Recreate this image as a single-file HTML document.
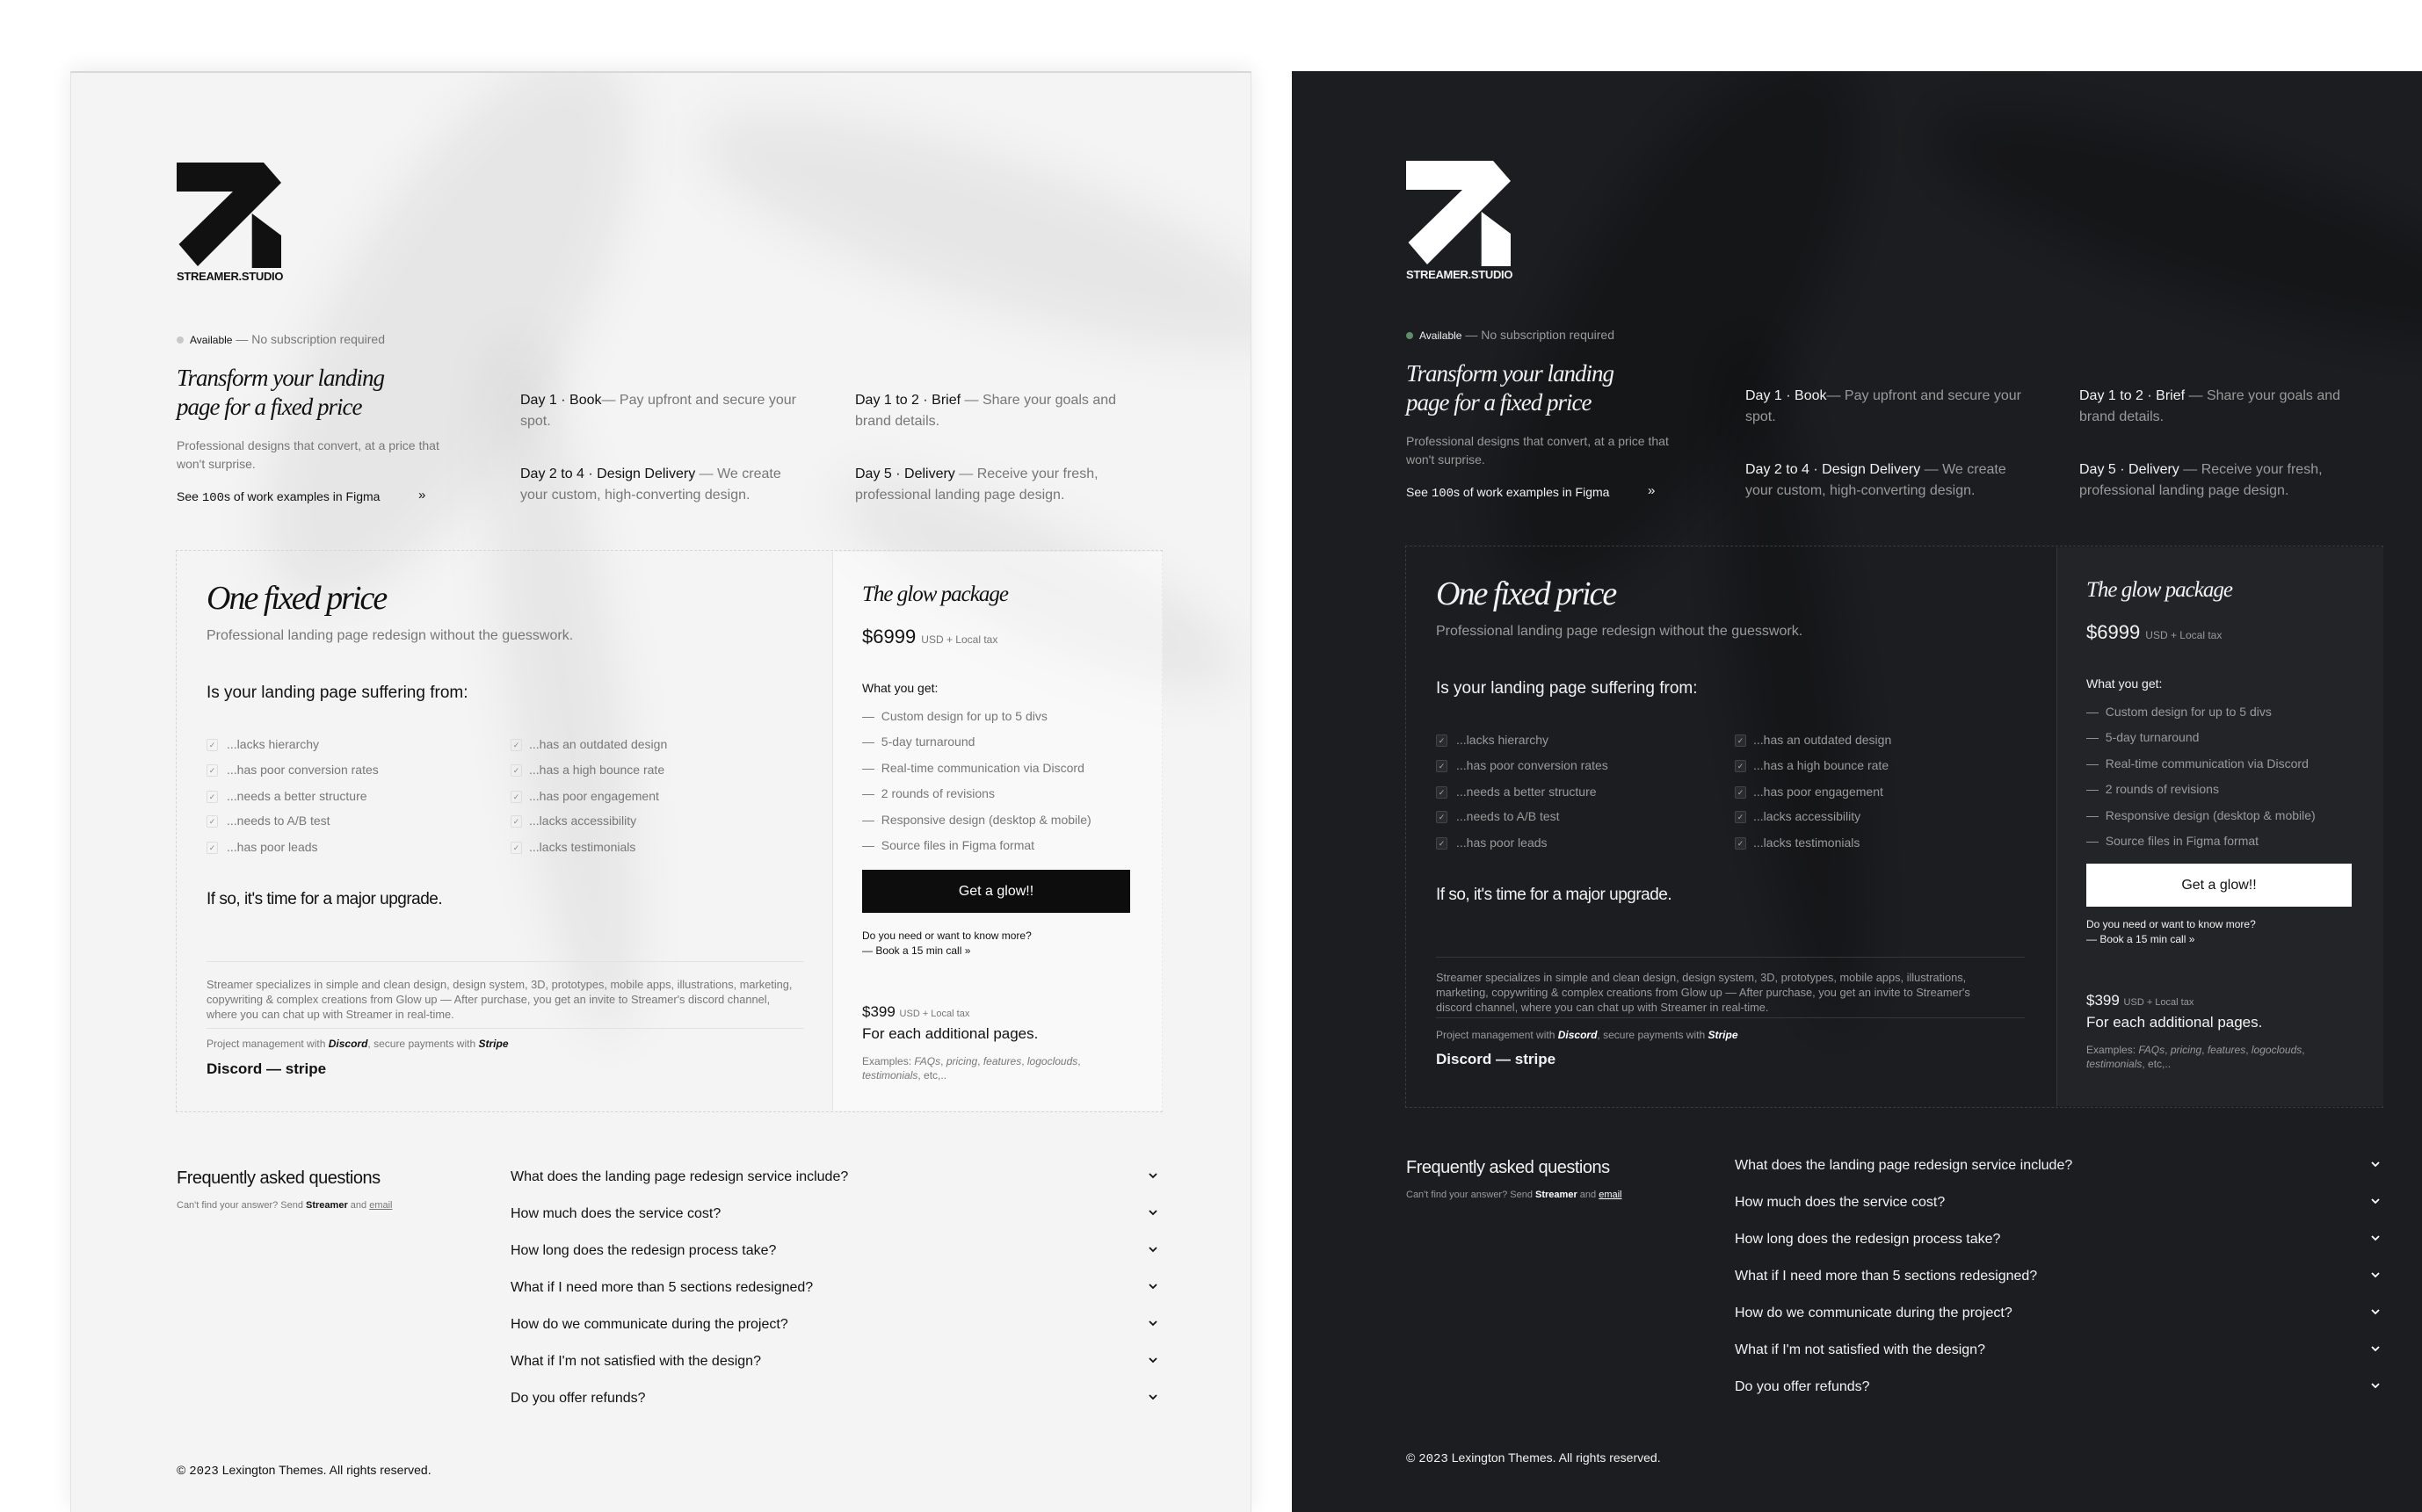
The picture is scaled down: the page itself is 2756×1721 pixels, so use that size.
<!DOCTYPE html>
<html><head><meta charset="utf-8">
<style>
*{margin:0;padding:0;box-sizing:border-box}
html,body{width:2756px;height:1702px;overflow:hidden;background:#fff;font-family:"Liberation Sans",sans-serif}
.panel{position:absolute;top:81px;width:1344px;height:1640px;overflow:hidden}
.light{left:80px;background:#f4f4f4;color:#111;box-shadow:0 -4px 24px rgba(0,0,0,.08);border-top:2px solid #d8d8d8;border-left:1px solid #e2e2e2;border-right:1px solid #e2e2e2}
.dark{left:1470px;background:#1c1d20;color:#f2f2f2}
.inner{position:absolute;left:0;top:0;width:1344px;height:1640px}
.dark .inner{transform:translate(10px,-3px)}
.a{position:absolute;white-space:nowrap}
.serif{font-family:"Liberation Serif",serif;font-style:italic;letter-spacing:-1px}
.mute{color:#777}
.dark .mute{color:#9a9a9a}
.blob{position:absolute;border-radius:50%;filter:blur(30px)}
.light .blob{background:rgba(0,0,0,.06)}
.dark .blob{background:rgba(0,0,0,.25)}
.box{position:absolute;left:119px;top:543px;width:1123px;height:640px;border:1px dashed #d6d6d6}
.dark .box{border-color:#3a3b3f}
.card{position:absolute;left:866px;top:545px;width:376px;height:636px;background:rgba(255,255,255,.45);border-left:1px solid #e4e4e4}
.dark .card{background:#232428;border-left:1px solid #34353a}
.chk{position:absolute;width:13px;height:14px;border:1px solid #ddd;border-radius:2px;font-size:9px;line-height:12px;text-align:center;color:#888}
.dark .chk{border-color:#444;color:#aaa;background:#2a2b2f}
.hr{position:absolute;height:1px;background:#e2e2e2}
.dark .hr{background:#36373b}
.btn{position:absolute;left:900px;top:907px;width:305px;height:49px;background:#0d0d0e;color:#fff;font-size:16px;text-align:center;line-height:49px}
.dark .btn{background:#fff;color:#111}
.chev{position:absolute;width:10px;height:7px}
.para{font-size:12.8px;line-height:17px}
</style></head><body>

<!-- LIGHT -->
<div class="panel light"><div class="inner">
<div class="blob" style="left:300px;top:-60px;width:260px;height:700px;transform:rotate(30deg)"></div>
<div class="blob" style="left:700px;top:100px;width:700px;height:160px;transform:rotate(18deg)"></div>
<div class="blob" style="left:500px;top:300px;width:120px;height:800px;transform:rotate(-8deg)"></div>
<div class="blob" style="left:850px;top:520px;width:500px;height:120px;transform:rotate(25deg)"></div>
<svg class="a" style="left:120px;top:102px" width="120" height="120" viewBox="0 0 120 120"><path d="M0 0H99L119 23L24 118L2.5 93L64 33H0Z" fill="#111"/><path d="M85.7 58L119 83V120H85.7Z" fill="#111"/></svg>
<div class="a" style="left:120px;top:224px;font-size:13px;font-weight:bold;letter-spacing:-0.3px">STREAMER.STUDIO</div>
<div class="a" style="left:120px;top:300px;width:8px;height:8px;border-radius:50%;background:#c8c8c8"></div>
<div class="a" style="left:135px;top:295px;font-size:14px"><span style="font-size:12px">Available</span> <span class="mute">— No subscription required</span></div>
<div class="a serif" style="left:120px;top:331px;font-size:27px;line-height:33px">Transform your landing<br>page for a fixed price</div>
<div class="a mute" style="left:120px;top:414px;font-size:14px;line-height:21px">Professional designs that convert, at a price that<br>won't surprise.</div>
<div class="a" style="left:120px;top:474px;font-size:14px">See <span style="font-family:'Liberation Mono',monospace">100</span>s of work examples in Figma</div>
<div class="a" style="left:395px;top:472px;font-size:15px">»</div>
<div class="a" style="left:511px;top:361px;font-size:16px;line-height:24px">Day 1 · Book<span class="mute">— Pay upfront and secure your<br>spot.</span></div>
<div class="a" style="left:892px;top:361px;font-size:16px;line-height:24px">Day 1 to 2 · Brief <span class="mute">— Share your goals and<br>brand details.</span></div>
<div class="a" style="left:511px;top:445px;font-size:16px;line-height:24px">Day 2 to 4 · Design Delivery <span class="mute">— We create<br>your custom, high-converting design.</span></div>
<div class="a" style="left:892px;top:445px;font-size:16px;line-height:24px">Day 5 · Delivery <span class="mute">— Receive your fresh,<br>professional landing page design.</span></div>
<div class="box"></div><div class="card"></div>
<div class="a serif" style="left:154px;top:576px;font-size:38px;letter-spacing:-2px">One fixed price</div>
<div class="a mute" style="left:154px;top:632px;font-size:16px">Professional landing page redesign without the guesswork.</div>
<div class="a" style="left:154px;top:695px;font-size:19px">Is your landing page suffering from:</div>
<div class="chk" style="left:154px;top:758px">✓</div><div class="a mute" style="left:177px;top:756px;font-size:14px">...lacks hierarchy</div>
<div class="chk" style="left:154px;top:787px">✓</div><div class="a mute" style="left:177px;top:785px;font-size:14px">...has poor conversion rates</div>
<div class="chk" style="left:154px;top:817px">✓</div><div class="a mute" style="left:177px;top:815px;font-size:14px">...needs a better structure</div>
<div class="chk" style="left:154px;top:845px">✓</div><div class="a mute" style="left:177px;top:843px;font-size:14px">...needs to A/B test</div>
<div class="chk" style="left:154px;top:875px">✓</div><div class="a mute" style="left:177px;top:873px;font-size:14px">...has poor leads</div>
<div class="chk" style="left:500px;top:758px">✓</div><div class="a mute" style="left:521px;top:756px;font-size:14px">...has an outdated design</div>
<div class="chk" style="left:500px;top:787px">✓</div><div class="a mute" style="left:521px;top:785px;font-size:14px">...has a high bounce rate</div>
<div class="chk" style="left:500px;top:817px">✓</div><div class="a mute" style="left:521px;top:815px;font-size:14px">...has poor engagement</div>
<div class="chk" style="left:500px;top:845px">✓</div><div class="a mute" style="left:521px;top:843px;font-size:14px">...lacks accessibility</div>
<div class="chk" style="left:500px;top:875px">✓</div><div class="a mute" style="left:521px;top:873px;font-size:14px">...lacks testimonials</div>
<div class="a" style="left:154px;top:930px;font-size:19px;letter-spacing:-0.5px">If so, it's time for a major upgrade.</div>
<div class="hr" style="left:154px;top:1011px;width:680px"></div>
<div class="a mute para" style="left:154px;top:1029px">Streamer specializes in simple and clean design, design system, 3D, prototypes, mobile apps, illustrations, marketing,<br>copywriting &amp; complex creations from Glow up — After purchase, you get an invite to Streamer's discord channel,<br>where you can chat up with Streamer in real-time.</div>
<div class="hr" style="left:154px;top:1087px;width:680px"></div>
<div class="a mute" style="left:154px;top:1098px;font-size:12px">Project management with <i style="color:#111;font-weight:bold">Discord</i>, secure payments with <i style="color:#111;font-weight:bold">Stripe</i></div>
<div class="a" style="left:154px;top:1124px;font-size:17px;font-weight:bold">Discord — stripe</div>
<div class="a serif" style="left:900px;top:580px;font-size:25px">The glow package</div>
<div class="a" style="left:900px;top:629px;font-size:22px">$6999 <span class="mute" style="font-size:12px">USD + Local tax</span></div>
<div class="a" style="left:900px;top:692px;font-size:14px">What you get:</div>
<div class="a mute" style="left:900px;top:718px;font-size:14px;line-height:29.4px">— &nbsp;Custom design for up to 5 divs<br>— &nbsp;5-day turnaround<br>— &nbsp;Real-time communication via Discord<br>— &nbsp;2 rounds of revisions<br>— &nbsp;Responsive design (desktop &amp; mobile)<br>— &nbsp;Source files in Figma format</div>
<div class="btn">Get a glow!!</div>
<div class="a" style="left:900px;top:974px;font-size:12px;line-height:17px">Do you need or want to know more?<br>— Book a 15 min call »</div>
<div class="a" style="left:900px;top:1059px;font-size:17px">$399 <span class="mute" style="font-size:11px">USD + Local tax</span></div>
<div class="a" style="left:900px;top:1084px;font-size:17px">For each additional pages.</div>
<div class="a mute" style="left:900px;top:1117px;font-size:12px;line-height:16px">Examples: <i>FAQs</i>, <i>pricing</i>, <i>features</i>, <i>logoclouds</i>,<br><i>testimonials</i>, etc,..</div>
<div class="a" style="left:120px;top:1247px;font-size:20px;letter-spacing:-0.5px">Frequently asked questions</div>
<div class="a mute" style="left:120px;top:1283px;font-size:11px">Can't find your answer? Send <b style="color:#111">Streamer</b> and <u>email</u></div>
<div class="a" style="left:500px;top:1236px;font-size:16px;line-height:42px">What does the landing page redesign service include?<br>How much does the service cost?<br>How long does the redesign process take?<br>What if I need more than 5 sections redesigned?<br>How do we communicate during the project?<br>What if I'm not satisfied with the design?<br>Do you offer refunds?</div>
<svg class="a" style="left:1225px;top:1250px" width="12" height="260" viewBox="0 0 12 260" fill="none" stroke="#111" stroke-width="1.8"><path d="M2 3l4 4 4-4M2 45l4 4 4-4M2 87l4 4 4-4M2 129l4 4 4-4M2 171l4 4 4-4M2 213l4 4 4-4M2 255l4 4 4-4"/></svg>
<div class="a" style="left:120px;top:1582px;font-size:14px">© <span style="font-family:'Liberation Mono',monospace">2023</span> Lexington Themes. All rights reserved.</div>
</div></div>

<!-- DARK -->
<div class="panel dark"><div class="inner">
<div class="blob" style="left:300px;top:-60px;width:260px;height:700px;transform:rotate(30deg)"></div>
<div class="blob" style="left:700px;top:100px;width:700px;height:160px;transform:rotate(18deg)"></div>
<div class="blob" style="left:500px;top:300px;width:120px;height:800px;transform:rotate(-8deg)"></div>
<svg class="a" style="left:120px;top:105px" width="120" height="120" viewBox="0 0 120 120"><path d="M0 0H99L119 23L24 118L2.5 93L64 33H0Z" fill="#fff"/><path d="M85.7 58L119 83V120H85.7Z" fill="#fff"/></svg>
<div class="a" style="left:120px;top:227px;font-size:13px;font-weight:bold;letter-spacing:-0.3px">STREAMER.STUDIO</div>
<div class="a" style="left:120px;top:300px;width:8px;height:8px;border-radius:50%;background:#5f8f6a"></div>
<div class="a" style="left:135px;top:295px;font-size:14px"><span style="font-size:12px">Available</span> <span class="mute">— No subscription required</span></div>
<div class="a serif" style="left:120px;top:331px;font-size:27px;line-height:33px">Transform your landing<br>page for a fixed price</div>
<div class="a mute" style="left:120px;top:414px;font-size:14px;line-height:21px">Professional designs that convert, at a price that<br>won't surprise.</div>
<div class="a" style="left:120px;top:474px;font-size:14px">See <span style="font-family:'Liberation Mono',monospace">100</span>s of work examples in Figma</div>
<div class="a" style="left:395px;top:472px;font-size:15px">»</div>
<div class="a" style="left:506px;top:361px;font-size:16px;line-height:24px">Day 1 · Book<span class="mute">— Pay upfront and secure your<br>spot.</span></div>
<div class="a" style="left:886px;top:361px;font-size:16px;line-height:24px">Day 1 to 2 · Brief <span class="mute">— Share your goals and<br>brand details.</span></div>
<div class="a" style="left:506px;top:445px;font-size:16px;line-height:24px">Day 2 to 4 · Design Delivery <span class="mute">— We create<br>your custom, high-converting design.</span></div>
<div class="a" style="left:886px;top:445px;font-size:16px;line-height:24px">Day 5 · Delivery <span class="mute">— Receive your fresh,<br>professional landing page design.</span></div>
<div class="box" style="width:1113px"></div><div class="card" style="left:860px;width:372px"></div>
<div class="a serif" style="left:154px;top:576px;font-size:38px;letter-spacing:-2px">One fixed price</div>
<div class="a mute" style="left:154px;top:632px;font-size:16px">Professional landing page redesign without the guesswork.</div>
<div class="a" style="left:154px;top:695px;font-size:19px">Is your landing page suffering from:</div>
<div class="chk" style="left:154px;top:758px">✓</div><div class="a mute" style="left:177px;top:756px;font-size:14px">...lacks hierarchy</div>
<div class="chk" style="left:154px;top:787px">✓</div><div class="a mute" style="left:177px;top:785px;font-size:14px">...has poor conversion rates</div>
<div class="chk" style="left:154px;top:817px">✓</div><div class="a mute" style="left:177px;top:815px;font-size:14px">...needs a better structure</div>
<div class="chk" style="left:154px;top:845px">✓</div><div class="a mute" style="left:177px;top:843px;font-size:14px">...needs to A/B test</div>
<div class="chk" style="left:154px;top:875px">✓</div><div class="a mute" style="left:177px;top:873px;font-size:14px">...has poor leads</div>
<div class="chk" style="left:494px;top:758px">✓</div><div class="a mute" style="left:515px;top:756px;font-size:14px">...has an outdated design</div>
<div class="chk" style="left:494px;top:787px">✓</div><div class="a mute" style="left:515px;top:785px;font-size:14px">...has a high bounce rate</div>
<div class="chk" style="left:494px;top:817px">✓</div><div class="a mute" style="left:515px;top:815px;font-size:14px">...has poor engagement</div>
<div class="chk" style="left:494px;top:845px">✓</div><div class="a mute" style="left:515px;top:843px;font-size:14px">...lacks accessibility</div>
<div class="chk" style="left:494px;top:875px">✓</div><div class="a mute" style="left:515px;top:873px;font-size:14px">...lacks testimonials</div>
<div class="a" style="left:154px;top:930px;font-size:19px;letter-spacing:-0.5px">If so, it's time for a major upgrade.</div>
<div class="hr" style="left:154px;top:1011px;width:670px"></div>
<div class="a mute para" style="left:154px;top:1026px">Streamer specializes in simple and clean design, design system, 3D, prototypes, mobile apps, illustrations,<br>marketing, copywriting &amp; complex creations from Glow up — After purchase, you get an invite to Streamer's<br>discord channel, where you can chat up with Streamer in real-time.</div>
<div class="hr" style="left:154px;top:1080px;width:670px"></div>
<div class="a mute" style="left:154px;top:1093px;font-size:12px">Project management with <i style="color:#fff;font-weight:bold">Discord</i>, secure payments with <i style="color:#fff;font-weight:bold">Stripe</i></div>
<div class="a" style="left:154px;top:1118px;font-size:17px;font-weight:bold">Discord — stripe</div>
<div class="a serif" style="left:894px;top:580px;font-size:25px">The glow package</div>
<div class="a" style="left:894px;top:629px;font-size:22px">$6999 <span class="mute" style="font-size:12px">USD + Local tax</span></div>
<div class="a" style="left:894px;top:692px;font-size:14px">What you get:</div>
<div class="a mute" style="left:894px;top:718px;font-size:14px;line-height:29.4px">— &nbsp;Custom design for up to 5 divs<br>— &nbsp;5-day turnaround<br>— &nbsp;Real-time communication via Discord<br>— &nbsp;2 rounds of revisions<br>— &nbsp;Responsive design (desktop &amp; mobile)<br>— &nbsp;Source files in Figma format</div>
<div class="btn" style="left:894px;top:905px;width:302px">Get a glow!!</div>
<div class="a" style="left:894px;top:966px;font-size:12px;line-height:17px">Do you need or want to know more?<br>— Book a 15 min call »</div>
<div class="a" style="left:894px;top:1051px;font-size:17px">$399 <span class="mute" style="font-size:11px">USD + Local tax</span></div>
<div class="a" style="left:894px;top:1076px;font-size:17px">For each additional pages.</div>
<div class="a mute" style="left:894px;top:1109px;font-size:12px;line-height:16px">Examples: <i>FAQs</i>, <i>pricing</i>, <i>features</i>, <i>logoclouds</i>,<br><i>testimonials</i>, etc,..</div>
<div class="a" style="left:120px;top:1240px;font-size:20px;letter-spacing:-0.5px">Frequently asked questions</div>
<div class="a mute" style="left:120px;top:1276px;font-size:11px">Can't find your answer? Send <b style="color:#fff">Streamer</b> and <u style="color:#fff">email</u></div>
<div class="a" style="left:494px;top:1228px;font-size:16px;line-height:42px">What does the landing page redesign service include?<br>How much does the service cost?<br>How long does the redesign process take?<br>What if I need more than 5 sections redesigned?<br>How do we communicate during the project?<br>What if I'm not satisfied with the design?<br>Do you offer refunds?</div>
<svg class="a" style="left:1217px;top:1242px" width="12" height="260" viewBox="0 0 12 260" fill="none" stroke="#fff" stroke-width="1.8"><path d="M2 3l4 4 4-4M2 45l4 4 4-4M2 87l4 4 4-4M2 129l4 4 4-4M2 171l4 4 4-4M2 213l4 4 4-4M2 255l4 4 4-4"/></svg>
<div class="a" style="left:120px;top:1573px;font-size:14px">© <span style="font-family:'Liberation Mono',monospace">2023</span> Lexington Themes. All rights reserved.</div>
</div></div>
</body></html>
